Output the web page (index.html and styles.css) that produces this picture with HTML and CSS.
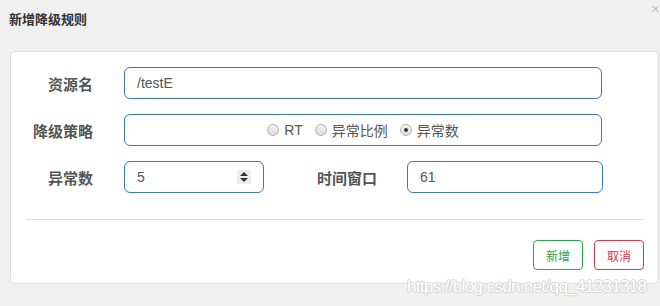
FILE: index.html
```html
<!DOCTYPE html>
<html lang="zh">
<head>
<meta charset="utf-8">
<link rel="stylesheet" href="styles.css">
</head>
<body>
<div class="dialog">
  <div class="header">
    <h3 class="title">新增降级规则</h3>
    <span class="close">×</span>
  </div>
  <div class="card">
    <div class="row">
      <label class="label">资源名</label>
      <div class="field wide">/testE</div>
    </div>
    <div class="row">
      <label class="label">降级策略</label>
      <div class="field wide radios">
        <span class="radio"><span class="dot"></span>RT</span>
        <span class="radio"><span class="dot"></span>异常比例</span>
        <span class="radio"><span class="dot checked"></span>异常数</span>
      </div>
    </div>
    <div class="row">
      <label class="label">异常数</label>
      <div class="field small">5<span class="spin"><span class="up"></span><span class="down"></span></span></div>
      <label class="label label2">时间窗口</label>
      <div class="field medium">61</div>
    </div>
    <div class="divider"></div>
    <div class="actions">
      <button class="btn btn-add">新增</button>
      <button class="btn btn-cancel">取消</button>
    </div>
  </div>
  <div class="watermark">https://blog.csdn.net/qq_41231318</div>
</div>
</body>
</html>
```

FILE: styles.css
```css
* { box-sizing: border-box; }
html, body { margin: 0; padding: 0; }
body {
  background: #f0f0f0;
  font-family: "Liberation Sans", "Noto Sans CJK SC", sans-serif;
  width: 660px;
  height: 306px;
  overflow: hidden;
}
.dialog { position: relative; height: 306px; }
.header {
  position: relative;
  height: 51px;
  padding: 11px 0 0 9px;
}
.title {
  margin: 0;
  font-size: 13px;
  line-height: 16px;
  font-weight: bold;
  color: #333;
  font-family: "Noto Sans CJK SC", sans-serif;
}
.close {
  position: absolute;
  left: 651px;
  top: 0px;
  font-size: 15px;
  color: #c4c4c4;
  line-height: 17px;
  font-family: "Liberation Sans", sans-serif;
}
.card {
  margin-left: 10px;
  width: 649px;
  height: 233px;
  background: #fff;
  border: 1px solid #dcdcdc;
  border-radius: 5px;
  padding: 15px 14px 0 15px;
}
.row {
  display: flex;
  align-items: center;
  height: 32px;
  margin-bottom: 15px;
}
.label {
  width: 67px;
  margin-right: 31px;
  text-align: right;
  font-family: "Noto Sans CJK SC", sans-serif;
  font-weight: bold;
  font-size: 15px;
  color: #555;
}
.label2 {
  width: 113px;
  margin-right: 30px;
}
.field {
  position: relative;
  height: 32px;
  border: 1px solid #3b78b6;
  border-radius: 6px;
  padding: 0 12px;
  display: flex;
  align-items: center;
  font-size: 14px;
  color: #555;
}
.wide { width: 478px; }
.small { width: 140px; }
.medium { width: 196px; }
.radios {
  justify-content: center;
  gap: 12px;
}
.radio {
  display: flex;
  align-items: center;
  font-family: "Liberation Sans", "Noto Sans CJK SC", sans-serif;
  font-size: 14px;
  color: #555;
}
.dot {
  width: 12px;
  height: 12px;
  border-radius: 50%;
  border: 1px solid #b4b4b4;
  background: linear-gradient(#f4f4f4, #dcdcdc);
  margin-right: 5px;
  position: relative;
}
.dot.checked {
  background: linear-gradient(#f4f4f4, #e0e0e0);
}
.dot.checked::after {
  content: "";
  position: absolute;
  left: 3px;
  top: 3px;
  width: 4px;
  height: 4px;
  border-radius: 50%;
  background: #333;
}
.spin {
  position: absolute;
  right: 12px;
  top: 8px;
  width: 14px;
  height: 14px;
  background: #eee;
}
.up, .down {
  position: absolute;
  left: 3px;
  width: 0;
  height: 0;
  border-left: 4px solid transparent;
  border-right: 4px solid transparent;
}
.up { top: 2px; border-bottom: 4px solid #333; }
.down { top: 8px; border-top: 4px solid #333; }
.divider {
  height: 1px;
  background: #e2e2e2;
  margin-top: 26px;
}
.actions {
  display: flex;
  justify-content: flex-end;
  gap: 11px;
  margin-top: 20px;
}
.btn {
  width: 50px;
  height: 30px;
  background: #fff;
  border-radius: 4px;
  font-family: "Noto Sans CJK SC", sans-serif;
  font-size: 12px;
  padding: 0;
}
.btn-add { border: 1px solid #28a745; color: #28a745; }
.btn-cancel { border: 1px solid #dc3545; color: #dc3545; }
.watermark {
  position: absolute;
  left: 407px;
  top: 277px;
  font-family: "Liberation Sans", sans-serif;
  font-size: 17px;
  color: #fff;
  letter-spacing: -0.65px;
  text-shadow: 1px 0 0 #d6d6d6, -1px 0 0 #d6d6d6, 0 1px 0 #d6d6d6, 0 -1px 0 #d6d6d6;
}
```
